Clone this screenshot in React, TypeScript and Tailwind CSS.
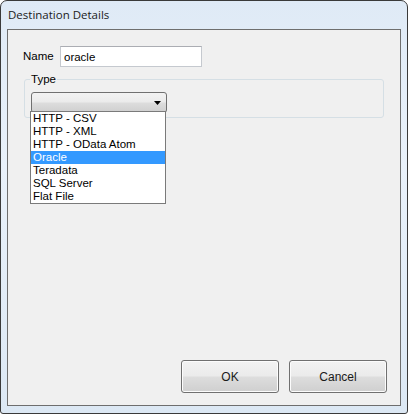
import React from 'react';

const options = ['HTTP - CSV', 'HTTP - XML', 'HTTP - OData Atom', 'Oracle', 'Teradata', 'SQL Server', 'Flat File'];

const WinButton: React.FC<{ label: string }> = ({ label }) => (
  <button className="w-[98px] h-[33px] rounded-[3px] border border-[#707070] bg-[linear-gradient(#f2f2f2_0%,#ebebeb_48%,#dddddd_52%,#cfcfcf_100%)] text-[12px] text-[#1a1a1a] shadow-[inset_0_0_0_1px_#fcfcfc]">
    {label}
  </button>
);

const App: React.FC = () => {
  const selected = 'Oracle';

  return (
    <div className="w-[408px] h-[414px] bg-white font-['Liberation_Sans',Arial,sans-serif]">
      <div className="w-[408px] h-[414px] flex flex-col rounded-t-[7px] rounded-b-[3px] border border-[#3a3a3a] bg-[linear-gradient(180deg,#dfeaf6_0%,#e9f1fa_40%,#dce8f4_100%)] px-[6px] pb-[7px]">
        {/* title bar */}
        <div className="h-[28px] flex items-center pl-[1px] text-[11.5px] text-[#1b1b1b] font-['Open_Sans',sans-serif]">
          Destination Details
        </div>

        {/* client area */}
        <div className="flex-1 flex flex-col border border-[#6e6e6e] bg-[#f0f0f0]">
          <div className="flex items-center mt-[16px] pl-[15px]">
            <span className="w-[37px] text-[11.5px] text-black">Name</span>
            <input
              readOnly
              value="oracle"
              className="w-[142px] h-[21px] border border-[#c5c9cf] border-t-[#abadb3] bg-white px-[3px] text-[11.5px] text-black outline-none"
            />
          </div>

          {/* group box */}
          <div className="relative ml-[16px] mt-[12px] w-[360px] h-[39px] rounded-[3px] border border-[#d5dfe5]">
            <span className="absolute left-[5px] top-[-7px] bg-[#f0f0f0] px-[1px] text-[11.5px] leading-[12px] text-black">Type</span>
            <div className="relative ml-[6px] mt-[12px] w-[136px] h-[21px]">
              <div className="h-full rounded-[3px] border border-[#707070] bg-[linear-gradient(#f2f2f2_0%,#ebebeb_48%,#dddddd_52%,#cfcfcf_100%)] flex items-center justify-end pr-[5px]">
                <svg width="7" height="4" viewBox="0 0 7 4">
                  <path d="M0 0H7L3.5 4Z" fill="#000" />
                </svg>
              </div>
              {/* dropdown */}
              <div className="absolute left-[-1px] top-[19px] w-[136px] border border-[#7a7a7a] bg-white z-10">
                {options.map((o) => (
                  <div
                    key={o}
                    className={
                      o === selected
                        ? 'h-[13px] bg-[#3399ff] text-white text-[11.5px] leading-[13px] pl-[2px]'
                        : 'h-[13px] text-black text-[11.5px] leading-[13px] pl-[2px]'
                    }
                  >
                    {o}
                  </div>
                ))}
              </div>
            </div>
          </div>

          <div className="mt-auto flex justify-end gap-[10px] pr-[13px] pb-[12px]">
            <WinButton label="OK" />
            <WinButton label="Cancel" />
          </div>
        </div>
      </div>
    </div>
  );
};

export default App;
